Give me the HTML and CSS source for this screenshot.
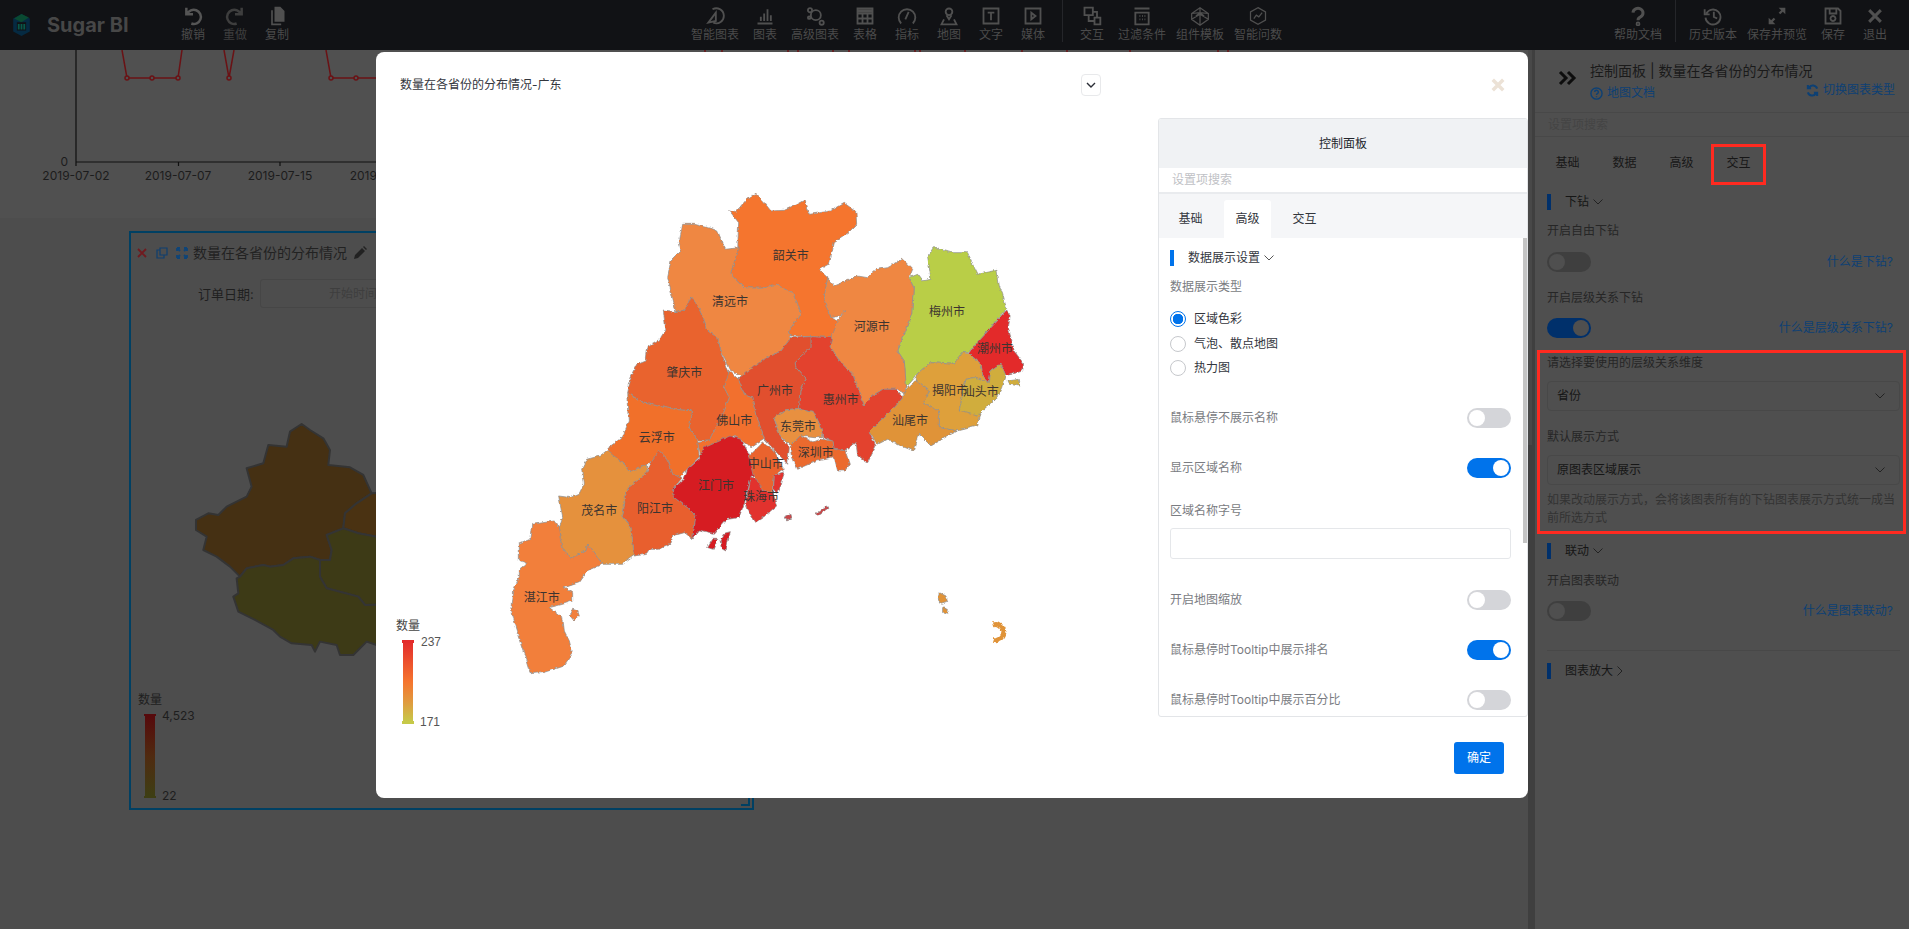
FILE: index.html
```html
<!DOCTYPE html>
<html lang="zh-CN">
<head>
<meta charset="utf-8">
<title>Sugar BI</title>
<link rel="stylesheet" href="styles.css">
</head>
<body>
<header class="topbar">
  <div class="brand">
    <svg class="logo" viewBox="0 0 20 26"><path d="M10 1 19 6v14l-9 5-9-5V6z" fill="#052a42"/><path d="M2 6 10 1l8 4-8 5z" fill="#0a4a32"/><path d="M5 10h10v9H5z" fill="#111215"/><path d="M6 12h2v6H6zM9 12h2v6H9zM12 12h2v6h-2z" fill="#08584a"/></svg>
    <span class="brand-name">Sugar BI</span>
  </div>
  <div class="tools">
    <div class="tool"><svg viewBox="0 0 24 24" class="ic bold"><path d="M4 2v8h8M5 10A8.500 8.500 0 1 1 10 21"/></svg><span>撤销</span></div>
    <div class="tool dim"><svg viewBox="0 0 24 24" class="ic bold"><path d="M20 2v8h-8M19 10A8.500 8.500 0 1 0 14 21"/></svg><span>重做</span></div>
    <div class="tool"><svg viewBox="0 0 24 24" class="ic solid"><path d="M9 1h7l5 5v13H9zM5 5h2v16h10v2H5z"/></svg><span>复制</span></div>
  </div>
  <div class="tools tools-mid">
    <div class="tool w4"><svg viewBox="0 0 24 24" class="ic line"><path d="M9 4a9 9 0 1 1 1 16M13 8 4 20l9-2z"/></svg><span>智能图表</span></div>
    <div class="tool"><svg viewBox="0 0 24 24" class="ic line"><path d="M3 21h18M7 18v-5M11 18V9M15 18V4M19 18v-7"/></svg><span>图表</span></div>
    <div class="tool w4"><svg viewBox="0 0 24 24" class="ic line"><circle cx="13" cy="11" r="6"/><circle cx="6" cy="5" r="2.500"/><circle cx="20" cy="20" r="2.500"/><circle cx="5" cy="14" r="1.500"/></svg><span>高级图表</span></div>
    <div class="tool"><svg viewBox="0 0 24 24" class="ic line"><path d="M3 3h18v18H3zM3 9h18M3 15h18M9 9v12M15 9v12"/><path d="M3 4h18v4H3z" class="fillc"/></svg><span>表格</span></div>
    <div class="tool"><svg viewBox="0 0 24 24" class="ic line"><path d="M5 21A10 10 0 1 1 19 21M10 16 14 7"/></svg><span>指标</span></div>
    <div class="tool"><svg viewBox="0 0 24 24" class="ic line"><circle cx="12" cy="7" r="4"/><path d="M9 11l3 5 3-5M6 16 3 22h18l-3-6"/></svg><span>地图</span></div>
    <div class="tool"><svg viewBox="0 0 24 24" class="ic line"><path d="M3 3h18v18H3zM8 8h8M12 8v9"/></svg><span>文字</span></div>
    <div class="tool"><svg viewBox="0 0 24 24" class="ic line"><path d="M3 3h18v18H3zM10 8l5 4-5 4z"/></svg><span>媒体</span></div>
    <i class="vline"></i>
    <div class="tool"><svg viewBox="0 0 24 24" class="ic line"><path d="M3 2h10v9H3zM15 14h7v8h-7zM13 7h5v7M8 11v7h7"/></svg><span>交互</span></div>
    <div class="tool w4"><svg viewBox="0 0 24 24" class="ic line"><path d="M3 3h18M4 8h16v14H4zM9 12h1M12 12h1M15 12h1M9 16h1M12 16h1M15 16h1"/></svg><span>过滤条件</span></div>
    <div class="tool w4"><svg viewBox="0 0 24 24" class="ic thin"><path d="M12 2 22 9v7l-10 7-10-7V9zM12 2v6l-10 1M12 2v6l10 1M2 16l10-6 10 6M12 10v13M12 8l-5 4M12 8l5 4"/></svg><span>组件模板</span></div>
    <div class="tool w4"><svg viewBox="0 0 24 24" class="ic thin"><path d="M12 2 21 7v10l-9 5-9-5V7zM7 15l3-4 3 2 4-5"/></svg><span>智能问数</span></div>
  </div>
  <div class="tools tools-right">
    <div class="tool w4"><svg viewBox="0 0 24 24" class="ic heavy"><path d="M6 8a6 5.500 0 1 1 9 5c-2 1-3 2-3 4"/><circle cx="12" cy="21.500" r="1" /></svg><span>帮助文档</span></div>
    <i class="vline"></i>
    <div class="tool w4"><svg viewBox="0 0 24 24" class="ic line"><path d="M2 4v6h6M4 9a9 9 0 1 1-1 5M13 7v6l4 2"/></svg><span>历史版本</span></div>
    <div class="tool w5"><svg viewBox="0 0 24 24" class="ic solid"><path d="M14 2h8v8l-3-3-3 3-2-2 3-3zM10 22H2v-8l3 3 3-3 2 2-3 3z"/></svg><span>保存并预览</span></div>
    <div class="tool"><svg viewBox="0 0 24 24" class="ic line"><path d="M3 3h15l3 3v15H3zM8 3v6h8V3M12 12a3 3 0 1 0 .01 0"/></svg><span>保存</span></div>
    <div class="tool"><svg viewBox="0 0 24 24" class="ic heavy"><path d="M5 5l14 14M19 5 5 19"/></svg><span>退出</span></div>
  </div>
</header>

<main class="workspace">
  <section class="canvas">
    <div class="line-card">
      <svg class="line-chart" viewBox="0 50 1528 168">
        <path class="axis" d="M76 50V162H376M76 162v4M178.500 162v4M280 162v4"/>
        <path class="series" d="M122 50 127 78H178L182 50M224 50 229 78 234 50M326 50 331 78H376M705 50v2M722 50v2M788 50v2M798 50v2M833 50v2M849 50v2M915 50v2M920 50v2M965 50v2M1022 50v2M1067 50v2M1130 50v2M1218 50v2M1228 50v2"/>
        <g class="dots"><circle cx="127" cy="78" r="2"/><circle cx="152" cy="78" r="2"/><circle cx="178" cy="78" r="2"/><circle cx="229" cy="78" r="2"/><circle cx="331" cy="78" r="2"/><circle cx="356" cy="78" r="2"/></g>
        <g class="axis-text">
          <text x="68" y="166" text-anchor="end">0</text>
          <text x="76" y="180" text-anchor="middle">2019-07-02</text>
          <text x="178" y="180" text-anchor="middle">2019-07-07</text>
          <text x="280" y="180" text-anchor="middle">2019-07-15</text>
          <text x="383" y="180" text-anchor="middle">2019-07-22</text>
        </g>
      </svg>
    </div>
    <div class="widget">
      <div class="widget-head">
        <svg class="wi" viewBox="0 0 12 12"><path class="w-x" d="M2 2l8 8M10 2l-8 8"/></svg>
        <svg class="wi" viewBox="0 0 12 12"><path class="w-o" d="M4 1h7v7H4zM4 3H1v8h7V8"/></svg>
        <svg class="wi" viewBox="0 0 12 12"><path class="w-e" d="M1 1l3 3M11 1 8 4M1 11l3-3M11 11 8 8M1 1v3M1 1h3M11 1v3M11 1H8M1 11V8M1 11h3M11 11V8M11 11H8"/></svg>
        <span class="widget-title">数量在各省份的分布情况</span>
        <svg class="wp" viewBox="0 0 14 14"><path d="M1 13l1-4 7-7 3 3-7 7zM10 1l1-1 3 3-1 1z"/></svg>
      </div>
      <div class="widget-filter">
        <span class="filter-name">订单日期:</span>
        <div class="date-input">开始时间</div>
      </div>
      <svg class="china-map" viewBox="130 340 622 470">
        <defs>
          <linearGradient id="bgbar" x1="0" y1="0" x2="0" y2="1"><stop offset="0" stop-color="#560a0c"/><stop offset=".5" stop-color="#502a10"/><stop offset="1" stop-color="#3e3e14"/></linearGradient>
        </defs>
        <g transform="translate(110 380) scale(.3333)" stroke="#343434" stroke-width="6" stroke-linejoin="round">
          <polygon fill="#453013" points="575,132 600,150 640,175 660,210 655,255 720,262 760,285 785,340 740,370 705,400 700,445 650,465 665,510 660,540 630,540 600,530 550,535 520,555 480,560 460,555 410,565 390,590 360,560 320,530 280,510 290,470 258,450 258,420 295,400 325,405 350,380 410,350 425,320 410,265 460,250 475,195 530,200 540,155"/>
          <polygon fill="#4a3212" points="785,340 1000,330 1000,470 800,470 745,460 700,445 705,400 740,370"/>
          <polygon fill="#3d3a16" points="700,445 745,460 800,470 1000,470 1000,670 765,675 745,650 650,625 630,590 630,540 660,540 665,510 650,465"/>
          <polygon fill="#3d3a16" points="390,590 410,565 460,555 480,560 520,555 550,535 600,530 630,540 630,590 650,625 745,650 765,675 1000,670 1000,850 800,795 770,785 730,825 690,825 680,795 630,785 615,815 605,795 545,790 510,770 490,750 435,720 385,695 370,650 385,640 380,595"/>
        </g>
        <text class="bg-legend" x="138" y="704">数量</text>
        <rect x="145" y="716" width="10" height="80" fill="url(#bgbar)"/>
        <rect x="144" y="714" width="12" height="2" fill="#560a0c"/>
        <rect x="144" y="796" width="12" height="2" fill="#3e3e14"/>
        <text class="bg-legend" x="162" y="720">4,523</text>
        <text class="bg-legend" x="162" y="800">22</text>
      </svg>
      <svg class="resize" viewBox="0 0 10 10"><path d="M9 1v8H1"/></svg>
    </div>
  </section>
  <div class="page-scroll"><i></i></div>
  <aside class="panel">
    <div class="panel-head">
      <svg class="collapse" viewBox="0 0 20 16"><path d="M2 2l6 6-6 6M10 2l6 6-6 6"/></svg>
      <div class="panel-head-text">
        <div class="panel-title">控制面板 | 数量在各省份的分布情况</div>
        <div class="panel-sub">
          <a class="doc-link"><svg viewBox="0 0 14 14"><circle cx="7" cy="7" r="6"/><path d="M5 5.500a2 2 0 1 1 3 1.700c-.7.400-1 .8-1 1.500M7 10v1"/></svg>地图文档</a>
          <a class="switch-link"><svg viewBox="0 0 14 14"><path d="M12 5A5 5 0 0 0 3 4M2 1v3.500h3.500M2 9a5 5 0 0 0 9 1M12 13V9.500H8.500"/></svg>切换图表类型</a>
        </div>
      </div>
    </div>
    <div class="panel-search">设置项搜索</div>
    <div class="panel-tabs"><span>基础</span><span>数据</span><span>高级</span><span>交互</span></div>
    <div class="panel-body">
      <div class="sec mt7"><i class="sec-bar"></i><span>下钻</span><svg class="chev" viewBox="0 0 10 6"><path d="M.500.500 5 5 9.500.500"/></svg></div>
      <div class="lbl mt11">开启自由下钻</div>
      <div class="row mt11"><i class="tg"></i><a class="q">什么是下钻?</a></div>
      <div class="lbl mt16">开启层级关系下钻</div>
      <div class="row mt10"><i class="tg on"></i><a class="q">什么是层级关系下钻?</a></div>
      <div class="lbl mt15">请选择要使用的层级关系维度</div>
      <div class="sel mt8"><span>省份</span><svg class="chev" viewBox="0 0 10 6"><path d="M.500.500 5 5 9.500.500"/></svg></div>
      <div class="lbl mt16">默认展示方式</div>
      <div class="sel mt8"><span>原图表区域展示</span><svg class="chev" viewBox="0 0 10 6"><path d="M.500.500 5 5 9.500.500"/></svg></div>
      <p class="note">如果改动展示方式，会将该图表所有的下钻图表展示方式统一成当前所选方式</p>
      <div class="sec mt16"><i class="sec-bar"></i><span>联动</span><svg class="chev" viewBox="0 0 10 6"><path d="M.500.500 5 5 9.500.500"/></svg></div>
      <div class="lbl mt12">开启图表联动</div>
      <div class="row mt10"><i class="tg"></i><a class="q">什么是图表联动?</a></div>
      <hr class="rule">
      <div class="sec mt12"><i class="sec-bar"></i><span>图表放大</span><svg class="chev-r" viewBox="0 0 6 10"><path d="M.500.500 5 5 .500 9.500"/></svg></div>
    </div>
  </aside>
</main>

<i class="mark mark-tab"></i>
<i class="mark mark-form"></i>

<div class="modal">
  <div class="modal-left">
    <div class="modal-head">
      <span class="modal-title">数量在各省份的分布情况-广东</span>
      <button class="drop"><svg viewBox="0 0 10 6"><path d="M1 1l4 4 4-4"/></svg></button>
    </div>
    <svg class="gd-map" viewBox="376 118 782 680">
      <defs>
        <filter id="rough" filterUnits="userSpaceOnUse" x="376" y="118" width="782" height="680">
          <feTurbulence type="turbulence" baseFrequency=".2" numOctaves="2" seed="4" result="n"/>
          <feDisplacementMap in="SourceGraphic" in2="n" scale="2.400" xChannelSelector="R" yChannelSelector="G"/>
        </filter>
        <linearGradient id="lgbar" x1="0" y1="0" x2="0" y2="1"><stop offset="0" stop-color="#e32c2c"/><stop offset=".5" stop-color="#f5752e"/><stop offset=".75" stop-color="#e09a3e"/><stop offset="1" stop-color="#c6c948"/></linearGradient>
      </defs>
      <g filter="url(#rough)">
        <g class="regions" transform="translate(600 170) scale(.3333)">
          <polygon fill="#f5752e" points="386,120 405,125 440,85 465,70 490,95 510,120 550,118 590,100 612,88 625,130 660,125 690,120 730,97 768,125 770,160 745,185 700,215 685,280 655,297 680,320 670,380 690,440 712,450 695,500 630,497 570,495 565,480 600,430 580,370 530,343 480,352 430,350 392,310 410,240 413,155"/>
          <polygon fill="#ef8743" points="245,160 280,160 330,172 350,180 373,235 415,230 392,310 430,350 480,352 530,343 580,370 600,430 565,480 570,500 540,540 490,565 430,620 390,600 360,540 350,500 320,480 300,420 272,378 250,420 225,425 200,320 210,270 240,240 235,215"/>
          <polygon fill="#b9ce47" points="1000,230 1050,245 1100,245 1110,270 1130,310 1188,298 1195,345 1205,370 1217,415 1170,470 1130,515 1105,545 1085,545 1060,580 990,575 950,610 915,650 910,570 890,540 935,430 940,350 925,320 950,310 965,330 990,325 985,290 980,260"/>
          <polygon fill="#ef8743" points="680,322 700,345 750,325 770,315 800,320 830,295 860,290 905,265 935,295 925,320 940,350 935,430 890,540 910,570 918,670 885,655 850,655 810,680 790,705 775,660 755,610 720,575 690,530 695,490 712,450 735,418 720,435 690,440 670,380"/>
          <polygon fill="#e32c2c" points="1217,420 1228,435 1222,470 1240,540 1268,578 1265,600 1215,615 1200,580 1170,600 1165,635 1145,615 1140,580 1105,548 1130,515 1170,470"/>
          <polygon fill="#dea03b" points="1105,548 1140,580 1145,615 1165,635 1120,620 1095,625 1075,720 1140,730 1130,765 1070,780 1015,770 1015,720 970,700 985,660 945,630 950,610 990,575 1060,580 1085,545"/>
          <polygon fill="#d0ad3e" points="1200,580 1215,615 1205,650 1190,680 1130,735 1075,720 1095,625 1120,620 1165,635 1170,600"/>
          <polygon fill="#d0ad3e" points="1220,630 1255,625 1258,645 1225,640"/>
          <polygon fill="#e09339" points="945,630 985,660 970,700 1015,720 1015,770 1070,780 1040,795 990,825 955,790 940,840 900,825 860,805 830,820 805,785 880,710 905,680 918,655"/>
          <polygon fill="#e3432d" points="630,497 695,500 690,530 720,575 755,610 775,660 790,705 810,680 850,655 885,655 905,680 880,710 805,785 825,825 800,875 770,855 765,815 735,840 700,835 695,810 668,800 665,780 640,725 595,715 600,660 615,625 585,590 582,575 630,530"/>
          <polygon fill="#e14f2e" points="570,500 630,497 630,530 582,575 585,590 615,625 600,660 595,715 555,720 520,745 535,790 565,830 560,880 490,805 470,745 455,680 430,670 412,625 490,565 540,540"/>
          <polygon fill="#e89040" points="520,740 555,720 595,715 640,725 665,780 665,800 640,800 600,795 570,825 535,790"/>
          <polygon fill="#eb6a2f" points="570,825 600,795 640,815 665,805 695,810 700,835 735,840 748,880 735,900 710,900 700,860 650,870 590,895 575,860"/>
          <polygon fill="#e9632d" points="187,420 225,425 250,420 272,378 300,420 320,480 350,500 360,540 385,610 370,650 385,680 370,720 325,810 290,810 265,770 275,720 220,715 125,695 80,665 90,620 110,580 135,570 140,530 175,510 195,480"/>
          <polygon fill="#f26f2e" points="385,600 412,625 430,670 455,680 470,745 490,805 450,830 440,820 400,795 350,825 330,830 300,860 290,815 325,810 370,720 385,680 370,650"/>
          <polygon fill="#f1702c" points="80,665 125,695 220,715 275,720 265,770 290,810 295,860 260,895 240,920 215,910 200,865 175,840 155,870 140,880 90,905 70,880 20,845 25,830 65,800 85,750"/>
          <polygon fill="#e85f2d" points="175,840 200,865 215,910 245,922 218,955 220,980 260,1010 285,1035 275,1105 250,1085 215,1095 210,1120 175,1135 150,1135 140,1150 100,1155 90,1070 65,1035 75,970 85,950 140,905 150,875"/>
          <polygon fill="#e5913d" points="20,840 70,880 90,905 140,880 140,905 85,950 75,970 65,1035 90,1070 100,1155 65,1180 5,1180 -40,1120 -45,1140 -90,1165 -115,1130 -125,1070 -115,1040 -127,975 -90,980 -65,970 -50,940 -55,895 -40,865 0,855"/>
          <polygon fill="#f27f3a" points="-205,1060 -140,1050 -125,1070 -115,1130 -90,1165 -45,1140 -40,1120 5,1180 -40,1200 -65,1235 -110,1250 -85,1265 -85,1290 -115,1300 -155,1310 -115,1340 -110,1380 -95,1410 -85,1450 -110,1485 -170,1505 -210,1508 -225,1460 -260,1350 -268,1320 -262,1260 -245,1220 -245,1200 -220,1180 -245,1170 -245,1120 -210,1105"/>
          <polygon fill="#f27f3a" points="-85,1315 -70,1320 -65,1335 -80,1350 -92,1335"/>
          <polygon fill="#d61a23" points="390,795 420,805 445,850 465,915 450,920 430,1000 415,1040 380,1045 340,1090 295,1080 275,1105 285,1035 260,1010 220,980 218,955 250,925 260,895 295,865 310,830"/>
          <polygon fill="#ea642f" points="445,855 485,815 520,840 540,880 550,895 520,915 515,965 485,960 460,915"/>
          <polygon fill="#e2302e" points="450,920 470,925 485,960 515,965 530,1005 495,1035 465,1055 445,1025 435,1000"/>
          <polygon fill="#e2302e" points="520,915 550,905 540,945 530,970 518,955"/>
          <polygon fill="#d61a23" points="320,1130 335,1105 350,1105 340,1135"/>
          <polygon fill="#d61a23" points="360,1110 370,1090 388,1085 380,1115 375,1140 365,1135"/>
          <polygon fill="#c9474a" points="645,1030 680,1005 684,1012 650,1036"/>
          <polygon fill="#c9474a" points="553,1038 570,1030 573,1044 557,1050"/>
          <polygon fill="#e09339" points="1015,1265 1035,1275 1040,1295 1022,1300 1012,1285"/>
          <polygon fill="#e09339" points="1025,1310 1042,1315 1040,1330 1025,1325"/>
          <path fill="none" stroke="#e09339" stroke-width="15" d="M1178 1362a24 24 0 1 1 0 46"/>
        </g>
      </g>
      <g class="map-labels">
        <text x="790.700" y="260">韶关市</text><text x="730" y="306">清远市</text><text x="871.700" y="331">河源市</text>
        <text x="947" y="316">梅州市</text><text x="995" y="353">潮州市</text><text x="950" y="395">揭阳市</text>
        <text x="980.700" y="396">汕头市</text><text x="684.300" y="377">肇庆市</text><text x="775" y="395">广州市</text>
        <text x="840.700" y="404">惠州市</text><text x="910" y="425">汕尾市</text><text x="734.300" y="425">佛山市</text>
        <text x="798" y="431">东莞市</text><text x="656.700" y="442">云浮市</text><text x="815.700" y="457">深圳市</text>
        <text x="765.700" y="468">中山市</text><text x="716" y="490">江门市</text><text x="761" y="501">珠海市</text>
        <text x="655" y="513">阳江市</text><text x="599.300" y="515">茂名市</text><text x="541.700" y="602">湛江市</text>
      </g>
      <text class="legend-text" x="396" y="630">数量</text>
      <rect x="403" y="642" width="10" height="80" fill="url(#lgbar)"/>
      <rect x="402" y="640" width="12" height="3" fill="#e32c2c"/>
      <rect x="402" y="721" width="12" height="3" fill="#c6c948"/>
      <text class="legend-num" x="421" y="646">237</text>
      <text class="legend-num" x="420" y="726">171</text>
    </svg>
  </div>
  <div class="modal-right">
    <div class="ctl">
      <div class="ctl-head">控制面板</div>
      <div class="ctl-search">设置项搜索</div>
      <div class="ctl-tabs"><span>基础</span><span class="active">高级</span><span>交互</span></div>
      <div class="ctl-body">
        <i class="ctl-thumb"></i>
        <div class="sec mt12"><i class="sec-bar"></i><span>数据展示设置</span><svg class="chev" viewBox="0 0 10 6"><path d="M.500.500 5 5 9.500.500"/></svg></div>
        <div class="lbl mt11">数据展示类型</div>
        <div class="radios">
          <label class="radio checked"><i></i>区域色彩</label>
          <label class="radio"><i></i>气泡、散点地图</label>
          <label class="radio"><i></i>热力图</label>
        </div>
        <div class="row mt27"><span class="lbl">鼠标悬停不展示名称</span><i class="tg"></i></div>
        <div class="row mt30"><span class="lbl">显示区域名称</span><i class="tg on"></i></div>
        <div class="lbl mt23">区域名称字号</div>
        <div class="text-input"></div>
        <div class="row mt31"><span class="lbl">开启地图缩放</span><i class="tg"></i></div>
        <div class="row mt30"><span class="lbl">鼠标悬停时Tooltip中展示排名</span><i class="tg on"></i></div>
        <div class="row mt30"><span class="lbl">鼠标悬停时Tooltip中展示百分比</span><i class="tg"></i></div>
      </div>
    </div>
    <div class="modal-foot"><button class="ok">确定</button></div>
  </div>
  <svg class="modal-close" viewBox="0 0 12 12"><path d="M1.500 1.500l9 9M10.500 1.500l-9 9"/></svg>
</div>
</body>
</html>
```
FILE: styles.css
```css
* { box-sizing: border-box; }
html, body { margin: 0; height: 929px; overflow: hidden; }
body {
  position: relative;
  background: #4d4d4d;
  color: #1a1a1a;
  font: 12px/20px Inter, "Noto Sans CJK SC", sans-serif;
}
i { display: block; font-style: normal; }

/* top bar */
.topbar { display: flex; height: 50px; background: #111215; color: #4b4b4b; }
.brand { display: flex; align-items: center; width: 172px; padding-left: 12px; }
.logo { width: 19px; height: 24px; }
.brand-name { margin-left: 16px; font-size: 20px; font-weight: 700; color: #474747; }
.tools { display: flex; }
.tools-mid { margin-left: 388px; }
.tools-right { margin-left: 322px; }
.tool { display: flex; flex-direction: column; align-items: center; width: 42px; padding-top: 6px; line-height: 14px; white-space: nowrap; }
.tool.w4 { width: 58px; }
.tool.w5 { width: 70px; }
.tool.dim { color: #3e3e3e; }
.tool.dim .ic { stroke: #3e3e3e; }
.tool span { margin-top: 2px; }
.ic { width: 20px; height: 20px; flex: none; }
.ic.line { fill: none; stroke: #505050; stroke-width: 2.200; }
.ic.bold { fill: none; stroke: #555; stroke-width: 3; }
.ic.thin { fill: none; stroke: #505050; stroke-width: 1.500; }
.ic.heavy { fill: none; stroke: #505050; stroke-width: 3.600; }
.ic.solid { fill: #505050; }
.ic .fillc { fill: #505050; stroke: none; }
.vline { width: 1px; height: 42px; margin: 0 8px; background: #25262a; }

/* work area */
.workspace { display: flex; height: 879px; }
.canvas { flex: 1; min-width: 0; }
.line-card { height: 168px; background: #505050; }
.line-chart { display: block; width: 1528px; height: 168px; }
.axis { fill: none; stroke: #101010; stroke-width: 1.200; }
.series { fill: none; stroke: #6a1215; stroke-width: 1.500; }
.dots circle { fill: #505050; stroke: #6a1215; stroke-width: 1.500; }
.axis-text text { fill: #1c1c1c; font-size: 12px; }

.widget { position: relative; width: 625px; height: 579px; margin: 13px 0 0 129px; border: 2px solid #004063; }
.widget-head { display: flex; align-items: center; height: 40px; padding-left: 5px; }
.wi { width: 12px; height: 12px; margin-right: 8px; fill: none; stroke-width: 1.800; }
.wi:nth-of-type(3) { margin-right: 5px; }
.w-x { stroke: #701a1f; }
.w-o { stroke: #0e3f70; stroke-width: 1.200; }
.w-e { stroke: #0e4478; }
.widget-title { font-size: 14px; color: #222; }
.wp { width: 14px; height: 14px; margin-left: 6px; fill: #222; }
.widget-filter { display: flex; align-items: center; margin-top: 6px; padding-left: 67px; }
.filter-name { width: 62px; font-size: 13px; color: #1f1f1f; }
.date-input { width: 300px; height: 29px; padding-left: 68px; border: 1px solid #464646; border-radius: 3px; color: #3e3e3e; line-height: 27px; }
.china-map { position: absolute; left: -1px; top: 107px; width: 622px; height: 470px; }
.bg-legend { fill: #1e1e1e; font-size: 12px; }
.resize { position: absolute; right: 2px; bottom: 2px; width: 10px; height: 10px; fill: none; stroke: #004063; stroke-width: 2; }

.page-scroll { width: 7px; background: #3f3f3f; }
.page-scroll i { height: 395px; background: #484848; width: 4px; }

/* right-hand panel */
.panel { width: 374px; background: #4f4f4f; }
.panel-head { display: flex; height: 62px; padding: 11px 14px 0 23px; }
.collapse { width: 20px; height: 16px; margin: 9px 12px 0 0; fill: none; stroke: #0d0d0d; stroke-width: 3; flex: none; }
.panel-head-text { flex: 1; }
.panel-title { font-size: 14px; color: #1a1a1a; }
.panel-sub { display: flex; justify-content: space-between; align-items: flex-start; margin-top: 2px; }
.doc-link, .switch-link { display: flex; align-items: center; color: #0d4074; }
.switch-link { margin-top: -3px; }
.doc-link svg, .switch-link svg { width: 13px; height: 13px; margin-right: 4px; fill: none; stroke: #0d4074; stroke-width: 1.500; }
.switch-link svg { stroke-width: 2.200; }
.panel-search { height: 25px; padding-left: 13px; border-top: 1px solid #484848; border-bottom: 1px solid #484848; color: #444; line-height: 24px; }
.panel-tabs { display: flex; height: 50px; margin-left: 4px; align-items: center; padding-top: 2px; color: #171717; }
.panel-tabs span { width: 57px; text-align: center; }
.panel-body { padding: 0 9px 0 12px; }
.panel .lbl { color: #262626; }
.panel .sec-bar { background: #00306b; }
.panel .sec { color: #161616; }
.panel .chev, .panel .chev-r { stroke: #222; }
.panel .rule { margin: 29px 0 0; border: 0; border-top: 1px solid #484848; }

.sec { display: flex; align-items: center; height: 16px; }
.sec-bar { width: 4px; height: 16px; margin-right: 14px; background: #0073eb; }
.chev { width: 10px; height: 6px; margin-left: 4px; fill: none; stroke: #555; }
.chev-r { width: 6px; height: 10px; margin-left: 4px; fill: none; stroke: #555; }
.lbl { color: #7a7c82; }
.row { display: flex; justify-content: space-between; align-items: center; height: 20px; }
.q { color: #0d4074; margin-right: 7px; }
.tg { position: relative; width: 44px; height: 20px; border-radius: 10px; background: #d4d5d9; }
.tg::after { content: ""; position: absolute; left: 2px; top: 2px; width: 16px; height: 16px; border-radius: 50%; background: #fff; }
.tg.on { background: #0073eb; }
.tg.on::after { left: 26px; }
.panel .tg { background: #3f3f3f; }
.panel .tg::after { background: #4f4f4f; }
.panel .tg.on { background: #00306b; }
.sel { display: flex; justify-content: space-between; align-items: center; height: 30px; padding: 0 14px 0 9px; border: 1px solid #484848; border-radius: 4px; color: #161616; }
.note { margin: 6px 0 0; line-height: 18px; color: #333; }

.mt7 { margin-top: 7px; } .mt8 { margin-top: 8px; } .mt10 { margin-top: 10px; } .mt11 { margin-top: 11px; }
.mt12 { margin-top: 12px; } .mt15 { margin-top: 15px; } .mt16 { margin-top: 16px; } .mt23 { margin-top: 23px; }
.mt27 { margin-top: 27px; } .mt30 { margin-top: 30px; } .mt31 { margin-top: 31px; }

/* annotation rectangles */
.mark { position: absolute; border: 3px solid #ff2a20; z-index: 5; }
.mark-tab { left: 1711px; top: 144px; width: 55px; height: 41px; }
.mark-form { left: 1537px; top: 350px; width: 369px; height: 184px; }

/* modal */
.modal { position: absolute; left: 376px; top: 52px; display: flex; width: 1152px; height: 746px; border-radius: 8px; background: #fff; overflow: hidden; }
.modal-left { width: 782px; }
.modal-head { display: flex; align-items: center; height: 66px; padding-left: 24px; color: #33363d; }
.modal-title { width: 681px; }
.drop { display: flex; align-items: center; justify-content: center; width: 20px; height: 22px; padding: 0; border: 1px solid #e8e9eb; border-radius: 4px; background: #fff; }
.drop svg { width: 10px; height: 6px; fill: none; stroke: #2a2d35; stroke-width: 1.400; }
.gd-map { display: block; width: 782px; height: 680px; }
.regions polygon { stroke: #8f8f8f; stroke-width: 2.200; stroke-linejoin: round; }
.map-labels text { fill: #3c3430; font-size: 12px; text-anchor: middle; }
.legend-text { fill: #444; font-size: 12px; }
.legend-num { fill: #555; font-size: 12px; font-family: "Liberation Sans", sans-serif; }
.modal-right { width: 370px; padding-top: 66px; }
.ctl { position: relative; display: flex; flex-direction: column; height: 599px; border: 1px solid #e3e5e8; border-radius: 3px; overflow: hidden; }
.ctl-head { height: 49px; background: #f0f2f4; color: #23262d; line-height: 49px; text-align: center; }
.ctl-search { height: 26px; padding-left: 13px; border-bottom: 2px solid #e9ebee; color: #c0c1c5; line-height: 23px; }
.ctl-tabs { display: flex; height: 44px; padding: 6px 0 0 8px; background: #f5f6f8; color: #33363d; }
.ctl-tabs span { width: 47px; margin-right: 10px; line-height: 38px; text-align: center; }
.ctl-tabs .active { background: #fff; border-radius: 3px 3px 0 0; }
.ctl-body { position: relative; flex: 1; padding: 0 16px 0 11px; color: #33363d; }
.ctl-thumb { position: absolute; right: 0; top: 0; width: 4px; height: 305px; background: #c4c4c4; }
.radios { margin-top: 10px; }
.radio { display: flex; align-items: center; height: 24.500px; }
.radio i { width: 16px; height: 16px; margin-right: 8px; border: 1px solid #c6c8cc; border-radius: 50%; }
.radio.checked i { border: 1px solid #0073eb; background: radial-gradient(circle, #0073eb 5px, #fff 5.500px); }
.text-input { height: 31px; margin-top: 7px; border: 1px solid #e5e7ea; border-radius: 3px; }
.modal-foot { display: flex; justify-content: flex-end; padding: 25px 24px 0 0; }
.ok { width: 50px; height: 32px; padding: 0; border: 0; border-radius: 3px; background: #0073eb; color: #fff; font: inherit; }
.modal-close { position: absolute; right: 23px; top: 26px; width: 14px; height: 14px; fill: none; stroke: #ece2d6; stroke-width: 3; }
```
